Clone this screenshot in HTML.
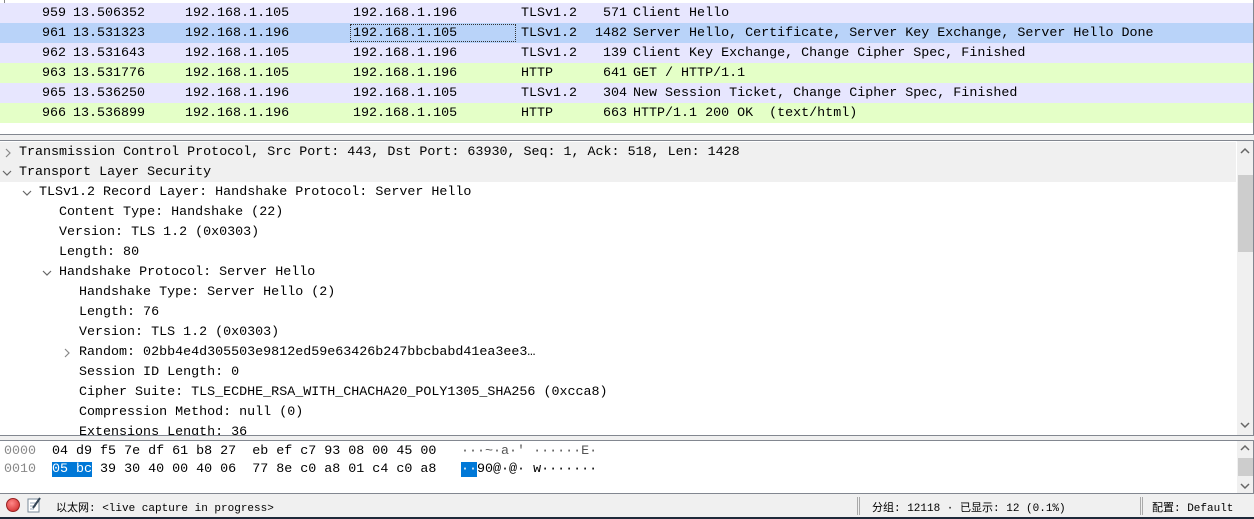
<!DOCTYPE html>
<html><head><meta charset="utf-8"><style>
*{margin:0;padding:0;box-sizing:border-box}
body{width:1254px;height:519px;overflow:hidden;background:#f0f0f0;font-family:"Liberation Mono",monospace;font-size:13.35px;color:#000;position:relative}
.abs{position:absolute;white-space:pre}
#pl{position:absolute;left:0;top:0;width:1254px;height:135px;background:#fff;border-bottom:1px solid #828790;border-right:1px solid #828790}
.r{position:absolute;left:0;width:1253px;height:20px;line-height:21px}
.r span{position:absolute;white-space:pre}
#dp{position:absolute;left:0;top:140px;width:1254px;height:296px;background:#fff;border:1px solid #828790;border-left:none}
.d{position:absolute;left:0;width:1236px;height:20px;line-height:21px;white-space:pre}
.sb{position:absolute;right:0;width:16px;background:#f0f0f0}
#hx{position:absolute;left:0;top:440px;width:1254px;height:54px;background:#fff;border:1px solid #828790;border-left:none}
#st{position:absolute;left:0;top:495px;width:1254px;height:22px;font-size:11px;font-family:"Liberation Mono","Noto Sans CJK SC",monospace}
svg.ar{position:absolute}
</style></head><body>
<div id="pl">
<div style="position:absolute;left:4px;top:0;width:1px;height:123px;background:#888"></div>
<div class="r" style="top:3px;background:#e7e6fe"><span style="left:42px">959</span><span style="left:73px">13.506352</span><span style="left:185px">192.168.1.105</span><span style="left:353px">192.168.1.196</span><span style="left:521px">TLSv1.2</span><span style="left:603px">571</span><span style="left:633px">Client Hello</span></div>
<div class="r" style="top:23px;background:#b9d3f9"><span style="left:42px">961</span><span style="left:73px">13.531323</span><span style="left:185px">192.168.1.196</span><span style="left:353px">192.168.1.105</span><span style="left:521px">TLSv1.2</span><span style="left:595px">1482</span><span style="left:633px">Server Hello, Certificate, Server Key Exchange, Server Hello Done</span><span style="left:350px;top:1px;width:166px;height:18px;border:1px dotted #333"></span></div>
<div class="r" style="top:43px;background:#e7e6fe"><span style="left:42px">962</span><span style="left:73px">13.531643</span><span style="left:185px">192.168.1.105</span><span style="left:353px">192.168.1.196</span><span style="left:521px">TLSv1.2</span><span style="left:603px">139</span><span style="left:633px">Client Key Exchange, Change Cipher Spec, Finished</span></div>
<div class="r" style="top:63px;background:#e4ffc7"><span style="left:42px">963</span><span style="left:73px">13.531776</span><span style="left:185px">192.168.1.105</span><span style="left:353px">192.168.1.196</span><span style="left:521px">HTTP</span><span style="left:603px">641</span><span style="left:633px">GET / HTTP/1.1</span></div>
<div class="r" style="top:83px;background:#e7e6fe"><span style="left:42px">965</span><span style="left:73px">13.536250</span><span style="left:185px">192.168.1.196</span><span style="left:353px">192.168.1.105</span><span style="left:521px">TLSv1.2</span><span style="left:603px">304</span><span style="left:633px">New Session Ticket, Change Cipher Spec, Finished</span></div>
<div class="r" style="top:103px;background:#e4ffc7"><span style="left:42px">966</span><span style="left:73px">13.536899</span><span style="left:185px">192.168.1.196</span><span style="left:353px">192.168.1.105</span><span style="left:521px">HTTP</span><span style="left:603px">663</span><span style="left:633px">HTTP/1.1 200 OK  (text/html)</span></div>
</div>

<div id="dp">
<div class="d" style="top:1px;background:#f0f0f0"><svg class="ar" style="left:4px;top:6px" width="8" height="10"><path d="M2 1 L6 5 L2 9" fill="none" stroke="#888" stroke-width="1.2"/></svg><span class="abs" style="left:19px">Transmission Control Protocol, Src Port: 443, Dst Port: 63930, Seq: 1, Ack: 518, Len: 1428</span></div>
<div class="d" style="top:21px;background:#f0f0f0"><svg class="ar" style="left:2px;top:7px" width="10" height="8"><path d="M1 2 L5 6 L9 2" fill="none" stroke="#666" stroke-width="1.2"/></svg><span class="abs" style="left:19px">Transport Layer Security</span></div>
<div class="d" style="top:41px"><svg class="ar" style="left:22px;top:7px" width="10" height="8"><path d="M1 2 L5 6 L9 2" fill="none" stroke="#666" stroke-width="1.2"/></svg><span class="abs" style="left:39px">TLSv1.2 Record Layer: Handshake Protocol: Server Hello</span></div>
<div class="d" style="top:61px"><span class="abs" style="left:59px">Content Type: Handshake (22)</span></div>
<div class="d" style="top:81px"><span class="abs" style="left:59px">Version: TLS 1.2 (0x0303)</span></div>
<div class="d" style="top:101px"><span class="abs" style="left:59px">Length: 80</span></div>
<div class="d" style="top:121px"><svg class="ar" style="left:42px;top:7px" width="10" height="8"><path d="M1 2 L5 6 L9 2" fill="none" stroke="#666" stroke-width="1.2"/></svg><span class="abs" style="left:59px">Handshake Protocol: Server Hello</span></div>
<div class="d" style="top:141px"><span class="abs" style="left:79px">Handshake Type: Server Hello (2)</span></div>
<div class="d" style="top:161px"><span class="abs" style="left:79px">Length: 76</span></div>
<div class="d" style="top:181px"><span class="abs" style="left:79px">Version: TLS 1.2 (0x0303)</span></div>
<div class="d" style="top:201px"><svg class="ar" style="left:63px;top:6px" width="8" height="10"><path d="M2 1 L6 5 L2 9" fill="none" stroke="#888" stroke-width="1.2"/></svg><span class="abs" style="left:79px">Random: 02bb4e4d305503e9812ed59e63426b247bbcbabd41ea3ee3…</span></div>
<div class="d" style="top:221px"><span class="abs" style="left:79px">Session ID Length: 0</span></div>
<div class="d" style="top:241px"><span class="abs" style="left:79px">Cipher Suite: TLS_ECDHE_RSA_WITH_CHACHA20_POLY1305_SHA256 (0xcca8)</span></div>
<div class="d" style="top:261px"><span class="abs" style="left:79px">Compression Method: null (0)</span></div>
<div class="d" style="top:281px;height:13px;overflow:hidden"><span class="abs" style="left:79px">Extensions Length: 36</span></div>
<div class="sb" style="top:0;height:294px"><div style="position:absolute;left:1px;top:34px;width:15px;height:77px;background:#cdcdcd"></div>
<svg class="ar" style="left:3px;top:6px" width="10" height="8"><path d="M1 6 L5 2 L9 6" fill="none" stroke="#666" stroke-width="1.5"/></svg>
<svg class="ar" style="left:3px;top:280px" width="10" height="8"><path d="M1 2 L5 6 L9 2" fill="none" stroke="#666" stroke-width="1.5"/></svg></div>
</div>

<div id="hx">
<div class="abs" style="left:4px;top:1px;line-height:19px;color:#888">0000</div>
<div class="abs" style="left:4px;top:19px;line-height:19px;color:#888">0010</div>
<div class="abs" style="left:52px;top:1px;line-height:19px">04 d9 f5 7e df 61 b8 27  eb ef c7 93 08 00 45 00</div>
<div class="abs" style="left:52px;top:19px;line-height:19px"><span style="background:#0078d7;color:#fff">05 bc</span> 39 30 40 00 40 06  77 8e c0 a8 01 c4 c0 a8</div>
<div class="abs" style="left:461px;top:1px;line-height:19px;color:#555">···~·a·' ······E·</div>
<div class="abs" style="left:461px;top:19px;line-height:19px"><span style="background:#0078d7;color:#fff">··</span>90@·@· w·······</div>
<div class="sb" style="top:0;height:52px"><div style="position:absolute;left:1px;top:17px;width:15px;height:18px;background:#cdcdcd"></div>
<svg class="ar" style="left:3px;top:3px" width="10" height="8"><path d="M1 6 L5 2 L9 6" fill="none" stroke="#666" stroke-width="1.5"/></svg>
<svg class="ar" style="left:3px;top:41px" width="10" height="8"><path d="M1 2 L5 6 L9 2" fill="none" stroke="#666" stroke-width="1.5"/></svg></div>
</div>

<div id="st">
<div style="position:absolute;left:6px;top:3px;width:14px;height:14px;border-radius:50%;background:radial-gradient(circle at 40% 35%,#f88,#c22);border:1px solid #922"></div>
<svg style="position:absolute;left:27px;top:2px" width="15" height="16"><rect x="1" y="2" width="11" height="13" fill="#fff" stroke="#789"/><path d="M3 6h6M3 9h6M3 12h4" stroke="#9ab"/><path d="M13 1 L6 11" stroke="#345" stroke-width="2"/></svg>
<div class="abs" style="left:56px;top:4px">以太网: &lt;live capture in progress&gt;</div>
<div style="position:absolute;left:857px;top:2px;width:3px;height:18px;border-left:1px solid #aaa;border-right:1px solid #aaa"></div>
<div class="abs" style="left:872px;top:4px">分组: 12118 · 已显示: 12 (0.1%)</div>
<div style="position:absolute;left:1140px;top:2px;width:3px;height:18px;border-left:1px solid #aaa;border-right:1px solid #aaa"></div>
<div class="abs" style="left:1152px;top:4px">配置: Default</div>
</div>
<div style="position:absolute;left:0;top:517px;width:1254px;height:2px;background:#1e2a3a"></div>
</body></html>
